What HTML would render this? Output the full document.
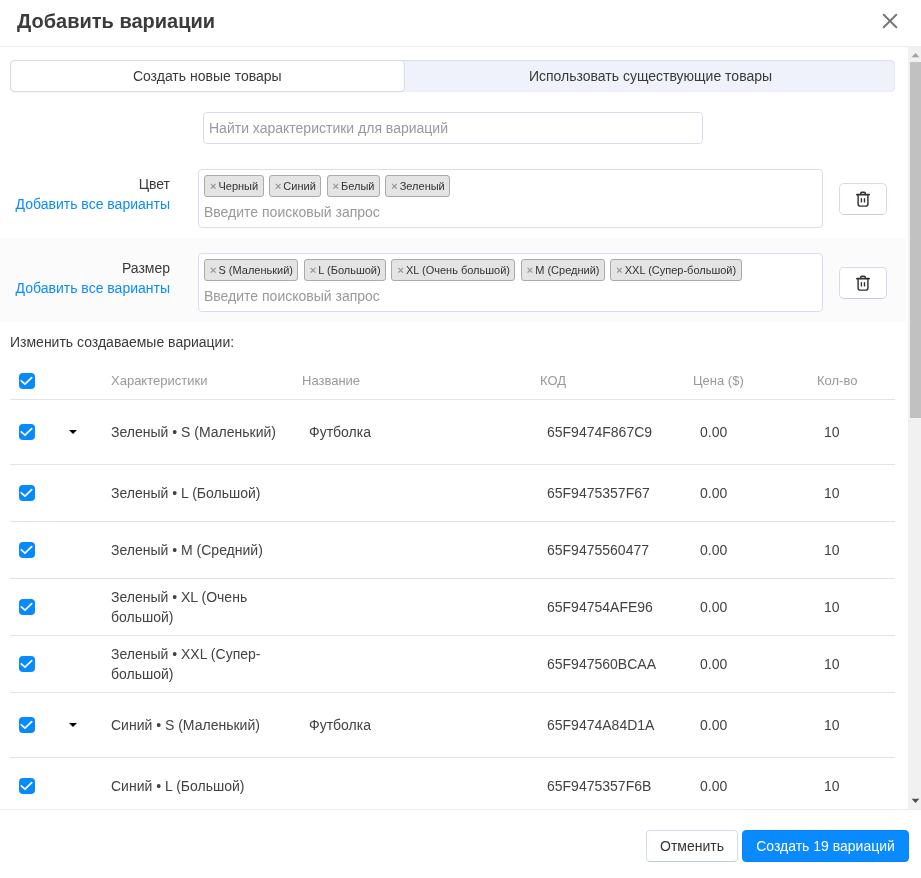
<!DOCTYPE html>
<html><head><meta charset="utf-8">
<style>
*{box-sizing:border-box;margin:0;padding:0}
html,body{width:921px;height:878px;overflow:hidden;background:#fff;will-change:transform;font-family:"Liberation Sans",sans-serif;color:#393939;font-size:14px}
.hdr{position:absolute;left:0;top:0;width:921px;height:47px;border-bottom:1px solid #efefef}
.hdr h1{position:absolute;left:17px;top:9px;font-size:20px;font-weight:bold;color:#3b3b3b;line-height:24px}
.close{position:absolute;left:880px;top:11px;width:20px;height:20px}
.body{position:absolute;left:0;top:47px;width:921px;height:762px;overflow:hidden}
.sb{position:absolute;left:908px;top:0;width:13px;height:762px;background:#f1f1f1}
.thumb{position:absolute;left:2px;top:15px;width:11px;height:356px;background:#c1c1c1}
.ftr{position:absolute;left:0;top:809px;width:921px;height:69px;border-top:1px solid #ececec}
.abs{position:absolute}
.seg{position:absolute;left:10px;top:13px;width:885px;height:32px;background:#eff2fa;border-radius:5px;box-shadow:inset 0 1px 2px rgba(0,0,0,.07),inset 0 0 1px rgba(0,0,0,.14)}
.tab1{position:absolute;left:1px;top:1px;width:392.5px;height:30px;background:#fff;border-radius:4px;box-shadow:0 0 0 1px #d3dbee, 0 1px 1px #b5c1de;text-align:center;line-height:30px}
.tab2{position:absolute;left:395px;top:0;width:491px;height:32px;text-align:center;line-height:32px}
.search{position:absolute;left:203px;top:65px;width:500px;height:32px;border:1px solid #d8def0;border-radius:4px;color:#999;padding-left:5px;line-height:30px}
.row{position:absolute;left:0;width:906px}
.lbl{position:absolute;right:736px;text-align:right;white-space:nowrap}
.link{color:#098bff}
.tagbox{position:absolute;left:198px;width:625px;height:59px;border:1px solid #d8def0;border-radius:4px;background:#fff}
.tags{position:absolute;left:5px;top:5px;white-space:nowrap}
.tag{display:inline-block;height:22px;line-height:20px;border:1px solid #aaa;background:#e4e4e4;border-radius:3px;font-size:11px;padding:0 4.4px 0 5px;margin-right:5.4px;color:#333}
.tag .x{color:#999;margin-right:2px;font-size:11px;font-weight:bold}
.ph{position:absolute;left:5px;top:34px;color:#999;font-size:14px}
.trash{position:absolute;left:839px;width:48px;height:32px;border:1px solid #d3dcef;border-bottom-color:#c3cde6;border-radius:5px;background:#fff}
.th{position:absolute;left:10px;width:885px;height:35px;border-bottom:1px solid #dde3f3}
.thc{position:absolute;top:8px;font-size:13px;color:#999;line-height:16px;margin-left:-10px}
.cb{position:absolute;left:9px;width:16px;height:16px;border-radius:4px;background:#088aff}
.cb svg{position:absolute;left:0;top:0;width:16px;height:16px}
.tr{position:absolute;left:10px;width:885px;border-bottom:1px solid #dde3f3}
.caret{position:absolute;left:59px;width:0;height:0;border-left:4px solid transparent;border-right:4px solid transparent;border-top:4px solid #000}
.td{position:absolute;top:0;display:flex;align-items:center;line-height:20px;font-size:14px;color:#424242}
.ch{left:101px;width:190px}
.nm{left:299px}
.kod{left:537px}
.pr{left:690px}
.qt{left:814px}
.btn{position:absolute;top:20px;height:32px;line-height:30px;border-radius:4px;font-size:14px;text-align:center}
.cancel{left:646px;width:92px;border:1px solid #d3dcef;border-bottom-color:#bfcae5;background:#fff;color:#333}
.primary{left:742px;width:167px;background:#0a8aff;color:#fff;border:1px solid #0a84f5}
.sb svg{position:absolute;left:0;width:13px;height:15px}
.trash svg{position:absolute;left:0;top:1px;width:46px;height:29px}
</style></head>
<body>
<div class="hdr"><h1>Добавить вариации</h1>
<svg class="close" viewBox="0 0 20 20"><path d="M3.7 3.7L16.3 16.3M16.3 3.7L3.7 16.3" stroke="#777" stroke-width="2" stroke-linecap="round"/></svg>
</div>
<div class="body">
  <div class="seg"><div class="tab1">Создать новые товары</div><div class="tab2">Использовать существующие товары</div></div>
  <div class="search">Найти характеристики для вариаций</div>

  <div class="row" style="top:111px;height:80px">
    <div class="lbl" style="top:18px">Цвет</div>
    <div class="lbl link" style="top:38px">Добавить все варианты</div>
    <div class="tagbox" style="top:11px">
      <div class="tags"><span class="tag"><span class="x">×</span>Черный</span><span class="tag"><span class="x">×</span>Синий</span><span class="tag"><span class="x">×</span>Белый</span><span class="tag"><span class="x">×</span>Зеленый</span></div>
      <div class="ph">Введите поисковый запрос</div>
    </div>
    <div class="trash" style="top:25px"><svg viewBox="0 0 46 29"><g fill="none" stroke="#333" stroke-linecap="round" stroke-linejoin="round"><path d="M16.9 9.6H29.1" stroke-width="1.9"/><path d="M20.7 9.4V8.4C20.7 7.8 21.2 7.3 21.8 7.3H24.2C24.8 7.3 25.3 7.8 25.3 8.4V9.4" stroke-width="1.5"/><path d="M18.1 10.2V19C18.1 20.2 19 21.1 20.2 21.1H25.8C27 21.1 27.9 20.2 27.9 19V10.2" stroke-width="1.45"/><path d="M21.4 13.6V16.9M24.5 13.6V16.9" stroke-width="1.4"/></g></svg></div>
  </div>

  <div class="row" style="top:191px;height:84px;background:#fbfbfb">
    <div class="lbl" style="top:22px">Размер</div>
    <div class="lbl link" style="top:42px">Добавить все варианты</div>
    <div class="tagbox" style="top:15px">
      <div class="tags"><span class="tag"><span class="x">×</span>S (Маленький)</span><span class="tag"><span class="x">×</span>L (Большой)</span><span class="tag"><span class="x">×</span>XL (Очень большой)</span><span class="tag"><span class="x">×</span>M (Средний)</span><span class="tag"><span class="x">×</span>XXL (Супер-большой)</span></div>
      <div class="ph">Введите поисковый запрос</div>
    </div>
    <div class="trash" style="top:29px"><svg viewBox="0 0 46 29"><g fill="none" stroke="#333" stroke-linecap="round" stroke-linejoin="round"><path d="M16.9 9.6H29.1" stroke-width="1.9"/><path d="M20.7 9.4V8.4C20.7 7.8 21.2 7.3 21.8 7.3H24.2C24.8 7.3 25.3 7.8 25.3 8.4V9.4" stroke-width="1.5"/><path d="M18.1 10.2V19C18.1 20.2 19 21.1 20.2 21.1H25.8C27 21.1 27.9 20.2 27.9 19V10.2" stroke-width="1.45"/><path d="M21.4 13.6V16.9M24.5 13.6V16.9" stroke-width="1.4"/></g></svg></div>
  </div>

  <div class="abs" style="left:10px;top:287px">Изменить создаваемые вариации:</div>

  <div class="th" style="top:318px">
    <div class="cb" style="top:8px"><svg viewBox="0 0 16 16"><path d="M2.3 7.8L6 11.1L12.7 4.6" fill="none" stroke="#fff" stroke-width="1.7" stroke-linecap="round" stroke-linejoin="miter"/></svg></div>
    <div class="thc" style="left:111px">Характеристики</div>
    <div class="thc" style="left:302px">Название</div>
    <div class="thc" style="left:540px">КОД</div>
    <div class="thc" style="left:693px">Цена ($)</div>
    <div class="thc" style="left:817px">Кол-во</div>
  </div>
  <div class="tr" style="top:353px;height:65px">
    <div class="cb" style="top:24px"><svg viewBox="0 0 16 16"><path d="M2.3 7.8L6 11.1L12.7 4.6" fill="none" stroke="#fff" stroke-width="1.7" stroke-linecap="round" stroke-linejoin="miter"/></svg></div><div class="caret" style="top:30px"></div>
    <div class="td ch" style="top:0;height:64px"><span>Зеленый • S (Маленький)</span></div>
    <div class="td nm" style="height:64px"><span>Футболка</span></div>
    <div class="td kod" style="height:64px"><span>65F9474F867C9</span></div>
    <div class="td pr" style="height:64px"><span>0.00</span></div>
    <div class="td qt" style="height:64px"><span>10</span></div>
  </div>
  <div class="tr" style="top:418px;height:57px">
    <div class="cb" style="top:20px"><svg viewBox="0 0 16 16"><path d="M2.3 7.8L6 11.1L12.7 4.6" fill="none" stroke="#fff" stroke-width="1.7" stroke-linecap="round" stroke-linejoin="miter"/></svg></div>
    <div class="td ch" style="top:0;height:56px"><span>Зеленый • L (Большой)</span></div>
    
    <div class="td kod" style="height:56px"><span>65F9475357F67</span></div>
    <div class="td pr" style="height:56px"><span>0.00</span></div>
    <div class="td qt" style="height:56px"><span>10</span></div>
  </div>
  <div class="tr" style="top:475px;height:57px">
    <div class="cb" style="top:20px"><svg viewBox="0 0 16 16"><path d="M2.3 7.8L6 11.1L12.7 4.6" fill="none" stroke="#fff" stroke-width="1.7" stroke-linecap="round" stroke-linejoin="miter"/></svg></div>
    <div class="td ch" style="top:0;height:56px"><span>Зеленый • M (Средний)</span></div>
    
    <div class="td kod" style="height:56px"><span>65F9475560477</span></div>
    <div class="td pr" style="height:56px"><span>0.00</span></div>
    <div class="td qt" style="height:56px"><span>10</span></div>
  </div>
  <div class="tr" style="top:532px;height:57px">
    <div class="cb" style="top:20px"><svg viewBox="0 0 16 16"><path d="M2.3 7.8L6 11.1L12.7 4.6" fill="none" stroke="#fff" stroke-width="1.7" stroke-linecap="round" stroke-linejoin="miter"/></svg></div>
    <div class="td ch" style="top:0;height:56px"><span>Зеленый • XL (Очень<br>большой)</span></div>
    
    <div class="td kod" style="height:56px"><span>65F94754AFE96</span></div>
    <div class="td pr" style="height:56px"><span>0.00</span></div>
    <div class="td qt" style="height:56px"><span>10</span></div>
  </div>
  <div class="tr" style="top:589px;height:57px">
    <div class="cb" style="top:20px"><svg viewBox="0 0 16 16"><path d="M2.3 7.8L6 11.1L12.7 4.6" fill="none" stroke="#fff" stroke-width="1.7" stroke-linecap="round" stroke-linejoin="miter"/></svg></div>
    <div class="td ch" style="top:0;height:56px"><span>Зеленый • XXL (Супер-<br>большой)</span></div>
    
    <div class="td kod" style="height:56px"><span>65F947560BCAA</span></div>
    <div class="td pr" style="height:56px"><span>0.00</span></div>
    <div class="td qt" style="height:56px"><span>10</span></div>
  </div>
  <div class="tr" style="top:646px;height:65px">
    <div class="cb" style="top:24px"><svg viewBox="0 0 16 16"><path d="M2.3 7.8L6 11.1L12.7 4.6" fill="none" stroke="#fff" stroke-width="1.7" stroke-linecap="round" stroke-linejoin="miter"/></svg></div><div class="caret" style="top:30px"></div>
    <div class="td ch" style="top:0;height:64px"><span>Синий • S (Маленький)</span></div>
    <div class="td nm" style="height:64px"><span>Футболка</span></div>
    <div class="td kod" style="height:64px"><span>65F9474A84D1A</span></div>
    <div class="td pr" style="height:64px"><span>0.00</span></div>
    <div class="td qt" style="height:64px"><span>10</span></div>
  </div>
  <div class="tr" style="top:711px;height:57px">
    <div class="cb" style="top:20px"><svg viewBox="0 0 16 16"><path d="M2.3 7.8L6 11.1L12.7 4.6" fill="none" stroke="#fff" stroke-width="1.7" stroke-linecap="round" stroke-linejoin="miter"/></svg></div>
    <div class="td ch" style="top:0;height:56px"><span>Синий • L (Большой)</span></div>
    
    <div class="td kod" style="height:56px"><span>65F9475357F6B</span></div>
    <div class="td pr" style="height:56px"><span>0.00</span></div>
    <div class="td qt" style="height:56px"><span>10</span></div>
  </div>
  <div class="sb"><svg style="top:0" viewBox="0 0 13 15"><path d="M3.6 10.3L7.5 6.1L11.4 10.3Z" fill="#a3a3a3"/></svg><div class="thumb"></div><svg style="top:747px" viewBox="0 0 13 15"><path d="M3.6 4.7L7.5 8.9L11.4 4.7Z" fill="#505050"/></svg></div>
</div>
<div class="ftr">
  <div class="btn cancel">Отменить</div>
  <div class="btn primary">Создать 19 вариаций</div>
</div>
</body></html>
